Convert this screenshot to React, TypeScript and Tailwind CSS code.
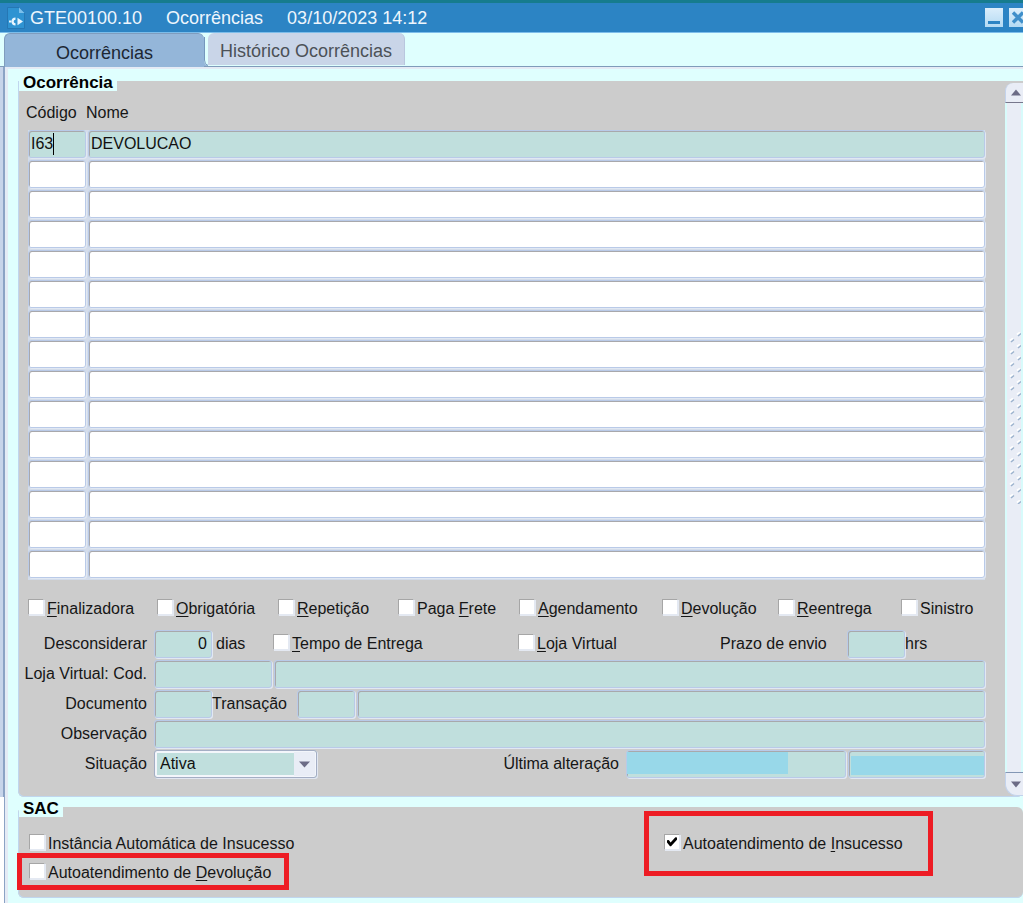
import React from 'react';
import clsx from 'clsx';

interface Occurrence {
  code: string;
  name: string;
}

const ROW_COUNT = 15;

const OCCURRENCES: Occurrence[] = [{ code: 'I63', name: 'DEVOLUCAO' }];

// "before" + underlined access key + "after"
const FLAGS = [
  { id: 'finalizadora', before: '', hotkey: 'F', after: 'inalizadora' },
  { id: 'obrigatoria', before: '', hotkey: 'O', after: 'brigatória' },
  { id: 'repeticao', before: '', hotkey: 'R', after: 'epetição' },
  { id: 'pagaFrete', before: 'Paga ', hotkey: 'F', after: 'rete' },
  { id: 'agendamento', before: '', hotkey: 'A', after: 'gendamento' },
  { id: 'devolucao', before: '', hotkey: 'D', after: 'evolução' },
  { id: 'reentrega', before: '', hotkey: 'R', after: 'eentrega' },
  { id: 'sinistro', before: 'Sinistro', hotkey: '', after: '' },
];

const Field: React.FC<React.InputHTMLAttributes<HTMLInputElement>> = ({ className, ...props }) => (
  <input
    type="text"
    className={clsx(
      'block h-7 min-w-0 rounded-[3px] border border-[#b9cae8] px-0.5 text-base text-[#111] shadow-[inset_1px_1px_0_#a8a8ac,1px_1px_0_#e1e8f3] outline-none',
      className
    )}
    {...props}
  />
);

interface CheckProps {
  id: string;
  before?: string;
  hotkey?: string;
  after?: string;
  defaultChecked?: boolean;
  children?: React.ReactNode;
}

const Check: React.FC<CheckProps> = ({ id, before, hotkey, after, defaultChecked, children }) => (
  <label htmlFor={id} className="relative flex w-fit items-center gap-[3px] whitespace-nowrap">
    <span className="relative mb-1 block size-4 shrink-0">
      <input
        id={id}
        type="checkbox"
        defaultChecked={defaultChecked}
        className="peer block size-4 appearance-none border border-t-[#a6a6a6] border-l-[#a6a6a6] border-r-[#e4e9f2] border-b-[#e4e9f2] bg-white shadow-[1px_1px_0_#e4e9f2]"
      />
      <svg viewBox="0 0 16 16" className="pointer-events-none absolute inset-0 hidden size-4 peer-checked:block">
        <path d="M3 6.2L4.8 6L6.6 8.4L11.4 3.2L13 3.4V5.8L7 12.2H6L3 8.6Z" fill="#000" />
      </svg>
    </span>
    <span>
      {before}
      {hotkey && <span className="underline underline-offset-2">{hotkey}</span>}
      {after}
    </span>
    {children}
  </label>
);

const RowLabel: React.FC<{ htmlFor: string; children: React.ReactNode }> = ({ htmlFor, children }) => (
  <label htmlFor={htmlFor} className="w-[123px] shrink-0 text-right whitespace-nowrap">
    {children}
  </label>
);

const GroupTitle: React.FC<{ children: React.ReactNode }> = ({ children }) => (
  <legend className="h-5 bg-[#dffffe] px-1 pt-0.5 text-[17px] leading-5 font-bold text-black">{children}</legend>
);

const TitleBar: React.FC = () => (
  <header className="flex h-[33px] items-center overflow-hidden border-t-[3px] border-b border-t-[#167c8e] border-b-[#7dbdea] bg-[#2c84c4] pl-[7px] text-lg leading-5 text-[#eef6fd]">
    <svg viewBox="0 0 18 22" className="mr-[5px] h-[22px] w-[18px] shrink-0">
      <path d="M0.5 0.5H12L17.5 6V21.5H0.5Z" fill="#2f93d2" stroke="#2577b4" />
      <path d="M12 0.5L17.5 6H12Z" fill="#7cc0ec" />
      <path d="M8.5 10.5A4 4 0 1 0 8.5 18.5V16.3A1.8 1.8 0 1 1 8.5 12.7Z" fill="#e9f5ff" />
      <path d="M2 13.5H4.5V15.5H2Z" fill="#e9f5ff" />
      <path d="M10.5 10.8L16 14.5L10.5 18.2Z" fill="#e9f5ff" />
    </svg>
    <h1 className="flex gap-6 whitespace-nowrap">
      <span>GTE00100.10</span>
      <span>Ocorrências</span>
      <span>03/10/2023 14:12</span>
    </h1>
    <div className="-mr-1 ml-auto flex shrink-0 gap-[6px]">
      <button type="button" aria-label="Minimizar" className="h-[19px] w-[18px] bg-linear-to-b from-[#dbeefb] to-[#b4daf3]">
        <svg viewBox="0 0 18 19" className="block h-[19px] w-[18px]">
          <path d="M3 13H15V16H3Z" fill="#2c84c4" />
        </svg>
      </button>
      <button type="button" aria-label="Fechar" className="h-[19px] w-[18px] bg-linear-to-b from-[#dbeefb] to-[#b4daf3]">
        <svg viewBox="0 0 18 19" className="block h-[19px] w-[18px]">
          <path d="M4 4.5L14 14.5M14 4.5L4 14.5" stroke="#3f8fca" strokeWidth="3.4" />
        </svg>
      </button>
    </div>
  </header>
);

const Tabs: React.FC = () => (
  <nav role="tablist" className="flex h-[34px] border-b border-[#7f9cba] pl-1 text-lg leading-5">
    <button
      type="button"
      role="tab"
      aria-selected="true"
      className="-mb-px h-[34px] w-[200px] rounded-t-md border-t border-l border-[#7f9cbd] bg-[#94b6d9] pt-1 text-[#1c2733]"
    >
      Ocorrências
    </button>
    <svg viewBox="0 0 4 33" className="h-[33px] w-1 shrink-0">
      <path d="M0 5V27Q0 32 4 32.5V33H0Z" fill="#94b6d9" />
      <path d="M0.5 4V27Q0.5 31.5 4 32.5" fill="none" stroke="#7597bd" />
    </svg>
    <button
      type="button"
      role="tab"
      aria-selected="false"
      className="h-8 w-[197px] rounded-t-md border-r border-[#b9c7de] bg-[#c9d5e8] pt-1 whitespace-nowrap text-[#4c5157]"
    >
      Histórico Ocorrências
    </button>
  </nav>
);

const ScrollBar: React.FC = () => (
  <div className="-mt-2 flex w-[18px] shrink-0 flex-col">
    <button type="button" aria-label="Rolar para cima" className="h-5 rounded-tl-lg border-b border-l border-b-[#77778c] border-l-[#c3d3ec] bg-[#e9edf6]">
      <svg viewBox="0 0 17 19" className="block h-[19px] w-[17px]">
        <path d="M10 6.5L15 12.5H5Z" fill="#6c6c86" />
      </svg>
    </button>
    <div className="flex flex-1 items-center border-r-2 border-l-2 border-[#d8fbfb] bg-[#e9edf6] pb-10">
      <svg className="ml-px h-[172px] w-[13px]">
        <defs>
          <pattern id="grip" width="16" height="12" patternUnits="userSpaceOnUse">
            <path d="M9 2.5L12 0.5M2 8.5L5 6.5" stroke="#fff" strokeWidth="2" />
            <path d="M10 4L13 1.5M3 10L6 7.5" stroke="#9db3ce" strokeWidth="1.6" />
          </pattern>
        </defs>
        <rect width="13" height="172" fill="url(#grip)" />
      </svg>
    </div>
    <button type="button" aria-label="Rolar para baixo" className="h-6 rounded-bl-xl border-t border-b border-l border-t-[#8397b5] border-b-[#c3d3ec] border-l-[#c3d3ec] bg-[#e9edf6]">
      <svg viewBox="0 0 17 22" className="block h-[22px] w-[17px]">
        <path d="M5 8.5H15L10 14.5Z" fill="#6c6c86" />
      </svg>
    </button>
  </div>
);

const OccurrenceTable: React.FC = () => (
  <table className="ml-1 w-full max-w-[calc(100%-4px)] table-fixed border-collapse">
    <colgroup>
      <col className="w-[60px]" />
      <col />
    </colgroup>
    <thead>
      <tr className="h-[39px] text-left leading-5">
        <th className="p-0 pt-1 font-normal"><span className="-ml-0.5">Código</span></th>
        <th className="p-0 pt-1 font-normal"><span className="-ml-0.5">Nome</span></th>
      </tr>
    </thead>
    <tbody>
      {Array.from({ length: ROW_COUNT }, (_, i) => {
        const row = OCCURRENCES[i];
        const color = row ? 'bg-[#c0dfdd]' : 'bg-white';
        return (
          <tr key={i}>
            <td className="relative bg-[#d3dcea] p-0 pr-0.5 pb-0.5">
              <Field aria-label={`Código ${i + 1}`} defaultValue={row?.code} className={clsx('w-full', color)} />
              {/* text caret of the focused cell */}
              {i === 0 && <span className="absolute top-[3px] left-[25px] h-[22px] w-px bg-black" />}
            </td>
            <td className="bg-[#d3dcea] p-0 pb-0.5">
              <Field aria-label={`Nome ${i + 1}`} defaultValue={row?.name} className={clsx('w-full', color)} />
            </td>
          </tr>
        );
      })}
    </tbody>
  </table>
);

const Details: React.FC = () => (
  <div>
    <div className="ml-1 grid h-[50px] grid-cols-[129fr_121fr_120fr_121fr_143fr_116fr_123fr_84fr] items-center pt-2">
      {FLAGS.map(flag => (
        <Check key={flag.id} {...flag} />
      ))}
    </div>

    <div className="flex h-[30px] items-start gap-[7px] leading-7">
      <RowLabel htmlFor="desconsiderar">Desconsiderar</RowLabel>
      <div className="grid flex-1 grid-cols-[119fr_245fr_202fr_265fr]">
        <div className="flex gap-1">
          <Field id="desconsiderar" defaultValue="0" className="w-[58px] bg-[#c0dfdd] pr-1 text-right" />
          <span>dias</span>
        </div>
        <Check id="tempoEntrega" hotkey="T" after="empo de Entrega" />
        <Check id="lojaVirtual" hotkey="L" after="oja Virtual" />
        <div className="flex">
          <label htmlFor="prazoEnvio" className="w-[127px]">Prazo de envio</label>
          <Field id="prazoEnvio" className="w-[58px] bg-[#c0dfdd]" />
          <span>hrs</span>
        </div>
      </div>
    </div>

    <div className="flex h-[30px] gap-[7px] leading-7">
      <RowLabel htmlFor="lojaCod">Loja Virtual: Cod.</RowLabel>
      <div className="flex flex-1 gap-0.5">
        <Field id="lojaCod" className="w-[118px] bg-[#c0dfdd]" />
        <Field aria-label="Loja Virtual: Nome" className="flex-1 bg-[#c0dfdd]" />
      </div>
    </div>

    <div className="flex h-[30px] gap-[7px] leading-7">
      <RowLabel htmlFor="documento">Documento</RowLabel>
      <div className="flex flex-1">
        <Field id="documento" className="w-[58px] bg-[#c0dfdd]" />
        <label htmlFor="transacao" className="w-[85px]">Transação</label>
        <Field id="transacao" className="mr-0.5 w-[58px] bg-[#c0dfdd]" />
        <Field aria-label="Nome da transação" className="flex-1 bg-[#c0dfdd]" />
      </div>
    </div>

    <div className="flex h-[30px] gap-[7px] leading-7">
      <RowLabel htmlFor="observacao">Observação</RowLabel>
      <Field id="observacao" className="flex-1 bg-[#c0dfdd]" />
    </div>

    <div className="flex h-[30px] gap-[7px] leading-7">
      <RowLabel htmlFor="situacao">Situação</RowLabel>
      <div className="relative h-7 w-[163px]">
        <select
          id="situacao"
          className="block h-7 w-full appearance-none rounded-[3px] border border-[#a4aec4] bg-[#c0dfdd] pl-[5px] text-base text-[#111] shadow-[1px_1px_0_#e1e7f1,inset_0_0_0_2px_#f3f6fb]"
        >
          <option>Ativa</option>
          <option>Inativa</option>
        </select>
        <svg viewBox="0 0 21 24" className="pointer-events-none absolute top-0.5 right-0.5 h-6 w-[21px] bg-[#e9edf6]">
          <path d="M5 9.5H16L10.5 15.5Z" fill="#6c6c86" />
        </svg>
      </div>
      <label htmlFor="alteracaoUsuario" className="ml-auto whitespace-nowrap">Última alteração</label>
      <div className="flex gap-0.5">
        <div className="relative">
          <Field id="alteracaoUsuario" className="w-[220px] bg-[#c0dfdd]" />
          <span className="absolute top-0.5 left-px h-[22px] w-[161px] bg-[#98d8e9]" />
        </div>
        <div className="relative">
          <Field aria-label="Data da última alteração" className="w-[137px] bg-[#c0dfdd]" />
          <span className="absolute top-1.5 right-px left-[3px] h-[19px] bg-[#98d8e9]" />
        </div>
      </div>
    </div>
  </div>
);

const App: React.FC = () => {
  return (
    <div className="min-h-screen overflow-hidden bg-[#dffffe] font-['Liberation_Sans',Arial,sans-serif] text-base text-[#161616]">
      <TitleBar />
      <Tabs />
      <main>
        <div className="border-l-[3px] border-[#c7d4ea]">
          <div className="border-l-2 border-[#8ba3c5]">
            <div className="border-t-2 border-l-[3px] border-[#e4ebf5] pt-0.5 pl-2.5">
              <fieldset className="min-w-0 rounded-b-md border-b border-l border-[#c0d6ee] bg-[#cccccc]">
                <GroupTitle>Ocorrência</GroupTitle>
                <div className="flex">
                  <div className="min-w-0 flex-1 pr-5 pb-4 pl-[5px]">
                    <OccurrenceTable />
                    <Details />
                  </div>
                  <ScrollBar />
                </div>
              </fieldset>
            </div>
          </div>
        </div>

        <div className="border-l-4 border-white">
          <div className="border-l border-[#8ba3c5]">
            <div className="border-l-[3px] border-[#e4ebf5] pb-[5px] pl-2.5">
              <fieldset className="min-w-0 rounded-md border-b border-l border-[#c0d6ee] bg-[#cccccc]">
                <GroupTitle>SAC</GroupTitle>
                <div className="grid grid-cols-[635fr_359fr] pt-3 pb-2.5 pl-2.5 leading-[29px]">
                  <Check id="instancia" before="Instância Automática de Insucesso" />
                  <Check id="autoInsucesso" before="Autoatendimento de " hotkey="I" after="nsucesso" defaultChecked>
                    <span className="pointer-events-none absolute -top-[18px] -right-[30px] -bottom-[18px] -left-5 border-[5px] border-[#ed1c24]" />
                  </Check>
                  <Check id="autoDevolucao" before="Autoatendimento de " hotkey="D" after="evolução">
                    <span className="pointer-events-none absolute -top-[5px] -right-[18px] -bottom-[3px] -left-3 border-[5px] border-[#ed1c24]" />
                  </Check>
                </div>
              </fieldset>
            </div>
          </div>
        </div>
      </main>
    </div>
  );
};

export default App;
